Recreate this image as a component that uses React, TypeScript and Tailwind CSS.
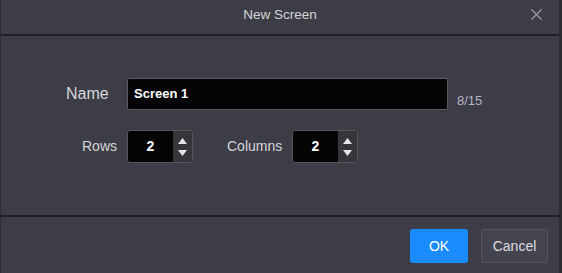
import { X } from 'lucide-react';

function Spinner({ value }: { value: number }) {
  return (
    <div className="flex h-[33px] w-[66px] overflow-hidden rounded-[3px] border border-[#56565c] bg-[#050505]">
      <div className="flex flex-1 items-center justify-center text-[14px] font-bold text-white">{value}</div>
      <div className="flex w-[19px] flex-col items-center justify-center gap-[6px] bg-[#35353a]">
        <svg width="9" height="6" viewBox="0 0 9 6">
          <path d="M4.5 0 L9 6 L0 6 Z" fill="#e6e6ea" />
        </svg>
        <svg width="9" height="6" viewBox="0 0 9 6">
          <path d="M0 0 L9 0 L4.5 6 Z" fill="#e6e6ea" />
        </svg>
      </div>
    </div>
  );
}

export default function App() {
  return (
    <div
      className="flex h-[273px] w-[562px] flex-col border-l border-r-[3px] border-l-[#2c2c33] border-r-[#2b2b32] bg-[#3c3d47] text-[#d8d8dc]"
      style={{ fontFamily: '"Liberation Sans", Arial, sans-serif' }}
    >
      {/* Header */}
      <div className="relative flex h-[36px] shrink-0 items-center justify-center border-b-2 border-[#1f1f25] pb-[3px]">
        <span className="text-[13.5px] text-[#d4d4d8]">New Screen</span>
        <X className="absolute right-[13px] top-[5px] text-[#a0a0a8]" size={19} strokeWidth={1.4} />
      </div>

      {/* Body */}
      <div className="flex flex-1 flex-col pt-[42px]">
        <div className="flex items-center">
          <span className="ml-[65px] w-[61px] text-[16px] text-[#d6d6da]">Name</span>
          <div className="flex h-[32px] w-[321px] items-center rounded-[2px] border border-[#5a5a60] bg-[#050507] px-[6px] text-[13px] font-bold text-white">
            Screen 1
          </div>
          <span className="mb-[1px] ml-[9px] self-end text-[13px] leading-[16px] text-[#b4b4c4]">8/15</span>
        </div>
        <div className="mt-[20px] flex items-center">
          <span className="ml-[81px] w-[45px] text-[14px] text-[#d6d6da]">Rows</span>
          <Spinner value={2} />
          <span className="ml-[34px] w-[65px] text-[14px] text-[#d6d6da]">Columns</span>
          <Spinner value={2} />
        </div>
      </div>

      {/* Footer */}
      <div className="flex h-[58px] shrink-0 items-start justify-end gap-[13px] border-t-2 border-[#1f1f25] pr-[11px] pt-[12px]">
        <button className="h-[34px] w-[58px] rounded-[3px] bg-[#1b8cff] text-[14px] text-white">OK</button>
        <button className="h-[34px] w-[67px] rounded-[3px] border border-[#55555e] bg-[#44444e] text-[14px] text-[#dcdce0]">
          Cancel
        </button>
      </div>
    </div>
  );
}
